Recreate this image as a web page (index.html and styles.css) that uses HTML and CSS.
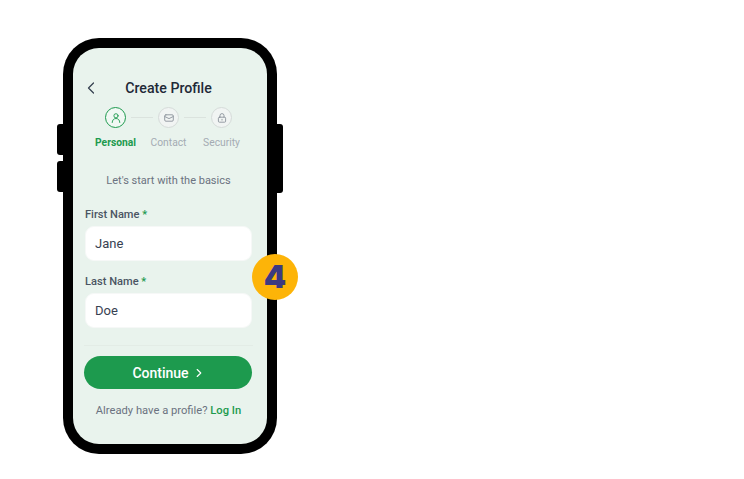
FILE: index.html
```html
<!DOCTYPE html>
<html lang="en">
<head>
    <meta charset="UTF-8">
    <meta name="viewport" content="width=device-width, initial-scale=1.0">
    <title>Create Profile</title>
    <link rel="stylesheet" href="styles.css">
</head>
<body>
    <div class="phone">
        <span class="side-btn side-left-1"></span>
        <span class="side-btn side-left-2"></span>
        <span class="side-btn side-right"></span>

        <div class="screen">
            <div class="header">
                <svg class="back" width="10" height="14" viewBox="0 0 10 14"><path d="M7.5 2 2.5 7l5 5" fill="none" stroke="#374151" stroke-width="1.3" stroke-linecap="round" stroke-linejoin="round"/></svg>
                <h1>Create Profile</h1>
            </div>

            <div class="steps">
                <div class="step active">
                    <div class="step-circle">
                        <svg width="12" height="12" viewBox="0 0 12 12"><circle cx="6" cy="3.8" r="2.1"/><path d="M2.2 10.5c0-2.4 1.6-4 3.8-4s3.8 1.6 3.8 4"/></svg>
                    </div>
                    <span class="step-label">Personal</span>
                </div>
                <div class="step-line"></div>
                <div class="step">
                    <div class="step-circle">
                        <svg width="12" height="12" viewBox="0 0 12 12"><rect x="1.7" y="2.8" width="8.6" height="6.4" rx="1.2"/><path d="M1.9 4.6 6 6.6l4.1-2"/></svg>
                    </div>
                    <span class="step-label">Contact</span>
                </div>
                <div class="step-line"></div>
                <div class="step">
                    <div class="step-circle">
                        <svg width="12" height="12" viewBox="0 0 12 12"><rect x="2.4" y="5.2" width="7.2" height="5" rx="1"/><path d="M4 5.2V3.6a2 2 0 0 1 4 0v1.6M6 7.3v.8"/></svg>
                    </div>
                    <span class="step-label">Security</span>
                </div>
            </div>

            <p class="intro">Let's start with the basics</p>

            <form class="form">
                <div class="form-group">
                    <label for="first">First Name <span class="req">*</span></label>
                    <input type="text" id="first" value="Jane">
                </div>
                <div class="form-group">
                    <label for="last">Last Name <span class="req">*</span></label>
                    <input type="text" id="last" value="Doe">
                </div>
            </form>

            <div class="divider"></div>

            <button type="button" class="continue">
                Continue
                <svg width="10" height="12" viewBox="0 0 10 12"><path d="M3.2 2.5 6.8 6l-3.6 3.500" fill="none" stroke="#fff" stroke-width="1.1" stroke-linecap="round" stroke-linejoin="round"/></svg>
            </button>

            <p class="login">Already have a profile? <a href="#">Log In</a></p>
        </div>

        <div class="badge">4</div>
    </div>
</body>
</html>
```

FILE: styles.css
```css
body {
    margin: 0;
    height: 479px;
    overflow: hidden;
    background-color: #fff;
    font-family: Roboto, "Liberation Sans", sans-serif;
}
.phone {
    position: relative;
    box-sizing: border-box;
    width: 214px;
    height: 416px;
    margin: 38px 0 0 63px;
    padding: 10px;
    background-color: #000;
    border-radius: 36px;
}
.side-btn {
    position: absolute;
    width: 7px;
    background-color: #000;
}
.side-left-1 {
    left: -6px;
    top: 86px;
    height: 31px;
    border-radius: 3px 0 0 3px;
}
.side-left-2 {
    left: -6px;
    top: 123px;
    height: 31px;
    border-radius: 3px 0 0 3px;
}
.side-right {
    right: -6px;
    top: 86px;
    height: 69px;
    border-radius: 0 3px 3px 0;
}
.screen {
    box-sizing: border-box;
    height: 396px;
    padding: 0 14px 0 11px;
    background-color: #e9f3ed;
    border-radius: 26px;
    overflow: hidden;
}
.header {
    position: relative;
    display: flex;
    justify-content: center;
    align-items: center;
    height: 20px;
    margin-top: 30px;
}
.back {
    position: absolute;
    left: 2px;
    top: 3px;
}
h1 {
    margin: 0;
    font-size: 14.2px;
    font-weight: 500;
    color: #1f2937;
}
.steps {
    display: flex;
    justify-content: center;
    align-items: flex-start;
    margin-top: 9px;
}
.step {
    display: flex;
    flex-direction: column;
    align-items: center;
    width: 21px;
}
.step-circle {
    display: flex;
    justify-content: center;
    align-items: center;
    flex-shrink: 0;
    box-sizing: border-box;
    width: 21px;
    height: 21px;
    border: 1px solid #d5dbd9;
    border-radius: 50%;
    background-color: #f1f4f3;
}
.step-circle svg {
    fill: none;
    stroke: #8b929b;
    stroke-width: 0.9;
    stroke-linecap: round;
    stroke-linejoin: round;
}
.step-label {
    margin-top: 8px;
    font-size: 10.3px;
    line-height: 13px;
    color: #a4abb3;
    white-space: nowrap;
}
.step.active .step-circle {
    border: 1.5px solid #1d9a4e;
    background-color: #f1f8f4;
}
.step.active .step-circle svg {
    stroke: #1d9a4e;
}
.step.active .step-label {
    font-weight: 700;
    color: #1d9a4e;
}
.step-line {
    width: 22px;
    height: 1px;
    margin: 10px 5px 0;
    background-color: #dbe3de;
}
.intro {
    margin: 25px 0 0;
    text-align: center;
    font-size: 11px;
    line-height: 14px;
    color: #6b7280;
}
.form {
    margin-top: 20px;
}
.form-group {
    margin: 0 1px 14px;
}
label {
    display: block;
    margin-bottom: 4px;
    font-size: 11.1px;
    line-height: 14px;
    font-weight: 500;
    color: #4b5563;
}
.req {
    color: #1d9a4e;
}
input {
    display: block;
    box-sizing: border-box;
    width: 100%;
    height: 35px;
    padding: 0 9px;
    border: 1px solid #f6f8f7;
    border-radius: 9px;
    background-color: #fff;
    font-family: inherit;
    font-size: 13px;
    color: #374151;
    outline: none;
}
.divider {
    height: 1px;
    margin-top: 17px;
    background-color: #e3ece6;
}
.continue {
    display: flex;
    justify-content: center;
    align-items: center;
    gap: 5px;
    width: 168px;
    height: 33px;
    margin-top: 10px;
    padding: 0;
    border: none;
    border-radius: 17px;
    background-color: #1d9a4e;
    color: #fff;
    font-family: inherit;
    font-size: 14px;
    font-weight: 500;
}
.login {
    margin: 15px 0 0;
    text-align: center;
    font-size: 11.2px;
    line-height: 14px;
    color: #6b7280;
}
.login a {
    color: #1d9a4e;
    font-weight: 500;
    text-decoration: none;
}
.badge {
    position: absolute;
    left: 189px;
    top: 216px;
    width: 46px;
    height: 46px;
    border-radius: 50%;
    background-color: #fdb408;
    color: #3d3a80;
    font-family: Inter, sans-serif;
    font-size: 32px;
    font-weight: 900;
    line-height: 46px;
    text-align: center;
}
```
